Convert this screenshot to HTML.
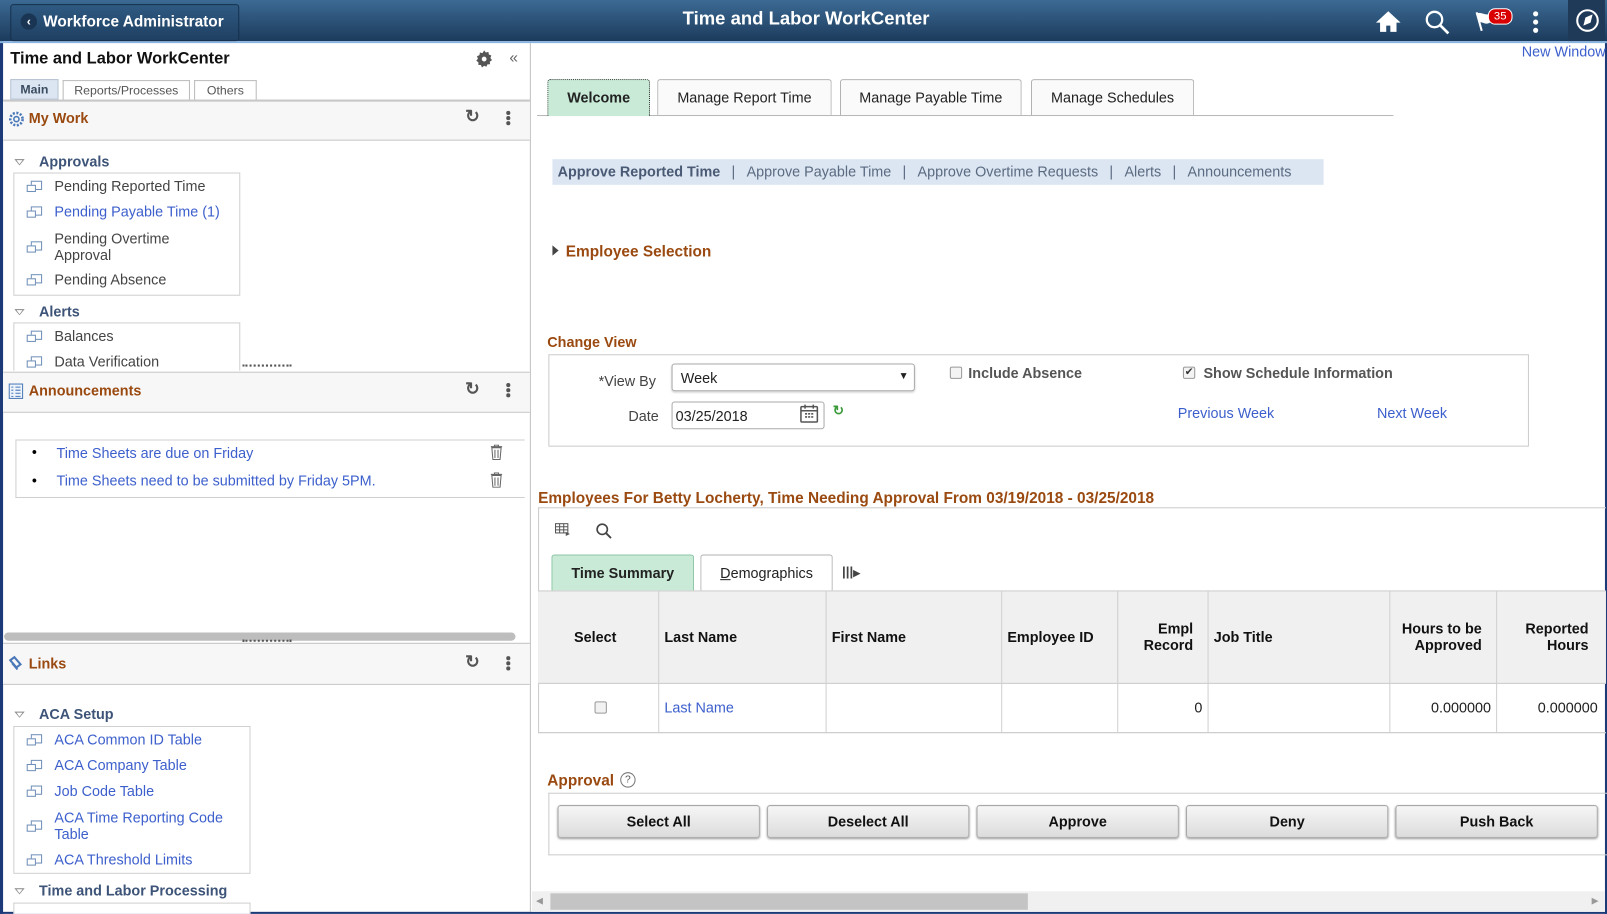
<!DOCTYPE html>
<html><head><meta charset="utf-8">
<style>
html,body{margin:0;padding:0;width:1607px;height:914px;overflow:hidden;background:#fff;font-family:"Liberation Sans",Arial,sans-serif;}
#w{position:absolute;left:0;top:0;width:1565px;height:890px;transform:scale(1.02684);transform-origin:0 0;}
.a{position:absolute;white-space:nowrap;}
.or{color:#9a4a10;font-weight:bold;}
.lk{color:#3c5fcc;}
.hd{position:absolute;left:3px;width:513px;background:#f7f7f7;border-top:1px solid #c8c8c8;border-bottom:1px solid #c8c8c8;}
.box{position:absolute;border:1px solid #d0d0d0;background:#fff;}
.ic{position:absolute;width:9px;height:7px;border:1px solid #6f8fb8;background:#fff;}
.ic:after{content:"";position:absolute;left:-5px;top:3px;width:7px;height:5px;border:1px solid #6f8fb8;background:#fff;}
.tri{position:absolute;width:0;height:0;border-left:5px solid transparent;border-right:5px solid transparent;border-top:6px solid #888;}
.tri:after{content:"";position:absolute;left:-3px;top:-5px;border-left:3px solid transparent;border-right:3px solid transparent;border-top:4px solid #fff;}
.tab{position:absolute;border:1px solid #b0b0b0;border-bottom:none;border-radius:3px 3px 0 0;background:#fafafa;font-size:14px;color:#222;text-align:center;box-sizing:border-box;}
.btn{position:absolute;top:784px;height:32px;width:197px;border:1px solid #a8a8a8;border-radius:3px;background:linear-gradient(#f6f6f6,#dcdcdc);box-shadow:0 1px 2px #999;font-size:14px;font-weight:bold;text-align:center;line-height:31px;color:#111;box-sizing:border-box;}
.th{position:absolute;font-size:14px;font-weight:bold;color:#111;}
.vl{position:absolute;width:1px;background:#d0d0d0;top:575px;height:139px;}
.sep{margin:0 11px;}
</style></head><body><div id="w">
<div class="a" style="left:0;top:0;width:3px;height:890px;background:#1c3a78"></div>
<div class="a" style="left:1563px;top:0;width:2px;height:890px;background:#1c3a78"></div>
<div class="a" style="left:0;top:888px;width:1565px;height:2px;background:#1c3a78"></div>
<div class="a" style="left:0;top:0;width:1565px;height:40px;background:linear-gradient(#3c6a94,#1c3b5c);border-bottom:2px solid #8ab4e0"></div>
<div class="a" style="left:10px;top:4px;width:221px;height:34px;border:1px solid #16304d;border-radius:3px;background:linear-gradient(#2f5a82,#1f4062)"></div>
<div class="a" style="left:20px;top:13px;width:16px;height:16px;border-radius:50%;background:#1a3553;color:#fff;font-size:12px;font-weight:bold;text-align:center;line-height:16px">‹</div>
<div class="a" style="left:42px;top:13px;color:#fff;font-weight:bold;font-size:15px">Workforce Administrator</div>
<div class="a" style="left:0;width:1570px;top:8px;text-align:center;color:#fff;font-weight:bold;font-size:18px">Time and Labor WorkCenter</div>
<svg class="a" style="left:1339px;top:9px" width="26" height="24" viewBox="0 0 26 24"><path d="M13 2L1 13h4v9h6v-6h4v6h6v-9h4z" fill="#fff"/></svg>
<svg class="a" style="left:1387px;top:9px" width="26" height="26" viewBox="0 0 26 26"><circle cx="10" cy="10" r="7.5" fill="none" stroke="#fff" stroke-width="2.2"/><path d="M15.5 15.5l8 8" stroke="#fff" stroke-width="2.6"/></svg>
<svg class="a" style="left:1436px;top:10px" width="20" height="22" viewBox="0 0 20 22"><path d="M2 2l5 18" stroke="#fff" stroke-width="2"/><path d="M2 3c5-2 8 3 14 0l-1 9c-5 3-8-2-11 0z" fill="#fff"/></svg>
<div class="a" style="left:1449px;top:8px;width:22px;height:14px;border-radius:7px;background:#d80000;border:1px solid #fff;color:#fff;font-size:11px;line-height:14px;text-align:center">35</div>
<div class="a" style="left:1493px;top:11px;width:5px;height:5px;border-radius:50%;background:#fff;box-shadow:0 8px 0 #fff,0 16px 0 #fff"></div>
<div class="a" style="left:1527px;top:0;width:36px;height:40px;background:#1f3a58"></div>
<svg class="a" style="left:1534px;top:8px" width="24" height="24" viewBox="0 0 24 24"><circle cx="12" cy="12" r="10" fill="none" stroke="#fff" stroke-width="2"/><path d="M8 17l2-8 7-3-2 8z" fill="#fff"/></svg>
<div class="a" style="left:516px;top:42px;width:1px;height:846px;background:#c0c0c0"></div>
<div class="a" style="left:10px;top:49px;font-size:16px;font-weight:bold;color:#111">Time and Labor WorkCenter</div>
<svg class="a" style="left:463px;top:49px" width="17" height="17" viewBox="0 0 16 16"><path d="M8 0l1.5 2 2.4-.6.4 2.4 2.3 1-.9 2.2 1.5 2-2 1.4.2 2.4-2.4.1-1 2.2L8 14.1l-2 1.6-1-2.2-2.4-.1.2-2.4-2-1.4 1.5-2-.9-2.2 2.3-1 .4-2.4 2.4.6z" fill="#555"/><circle cx="8" cy="8" r="2.2" fill="#fff"/></svg>
<div class="a" style="left:496px;top:48px;font-size:15px;color:#666">«</div>
<div class="a" style="left:3px;top:97px;width:513px;height:1px;background:#bbb"></div>
<div class="a" style="left:10px;top:77px;width:47px;height:20px;background:#dbe6f2;border:1px solid #b8c4d4;font-size:12px;font-weight:bold;color:#3b4b60;text-align:center;line-height:18px;box-sizing:border-box">Main</div>
<div class="a" style="left:61px;top:78px;width:124px;height:19px;border:1px solid #bbb;border-bottom:none;font-size:12px;color:#555;text-align:center;line-height:18px;box-sizing:border-box">Reports/Processes</div>
<div class="a" style="left:189px;top:78px;width:61px;height:19px;border:1px solid #bbb;border-bottom:none;font-size:12px;color:#555;text-align:center;line-height:18px;box-sizing:border-box">Others</div>
<div class="hd" style="top:98px;height:37px"></div>
<svg class="a" style="left:8px;top:108px" width="16" height="16" viewBox="0 0 16 16"><circle cx="8" cy="8" r="6" fill="none" stroke="#4a78b8" stroke-width="2.5" stroke-dasharray="2 1.5"/><circle cx="8" cy="8" r="2.5" fill="none" stroke="#4a78b8" stroke-width="1.5"/></svg>
<div class="a or" style="left:28px;top:107px;font-size:14px">My Work</div>
<div class="a" style="left:453px;top:104px;font-size:17px;font-weight:bold;color:#555">↻</div>
<div class="a" style="left:493px;top:108px;width:4px;height:4px;border-radius:50%;background:#555;box-shadow:0 5px 0 #555,0 10px 0 #555"></div>
<div class="tri" style="left:14px;top:155px"></div>
<div class="a" style="left:38px;top:149px;font-size:14px;font-weight:bold;color:#3d5478">Approvals</div>
<div class="box" style="left:13px;top:168px;width:219px;height:118px"></div>
<div class="ic" style="left:30px;top:176px"></div><div class="a" style="left:53px;top:173px;font-size:14px;color:#444">Pending Reported Time</div>
<div class="ic" style="left:30px;top:201px"></div><div class="a lk" style="left:53px;top:198px;font-size:14px">Pending Payable Time (1)</div>
<div class="ic" style="left:30px;top:235px"></div><div class="a" style="left:53px;top:224px;font-size:14px;color:#444;line-height:16px">Pending Overtime<br>Approval</div>
<div class="ic" style="left:30px;top:267px"></div><div class="a" style="left:53px;top:264px;font-size:14px;color:#444">Pending Absence</div>
<div class="tri" style="left:14px;top:301px"></div>
<div class="a" style="left:38px;top:295px;font-size:14px;font-weight:bold;color:#3d5478">Alerts</div>
<div class="box" style="left:13px;top:314px;width:219px;height:60px;border-bottom:none"></div>
<div class="ic" style="left:30px;top:322px"></div><div class="a" style="left:53px;top:319px;font-size:14px;color:#444">Balances</div>
<div class="ic" style="left:30px;top:347px"></div><div class="a" style="left:53px;top:344px;font-size:14px;color:#444">Data Verification</div>
<div class="a" style="left:3px;top:361px;width:513px;height:1px;background:#fff"></div>
<div class="a" style="left:236px;top:355px;width:48px;border-top:2px dotted #555"></div>
<div class="hd" style="top:362px;height:38px"></div>
<svg class="a" style="left:8px;top:373px" width="15" height="16" viewBox="0 0 15 16"><rect x="1" y="1" width="13" height="14" fill="#eef4fb" stroke="#4a78b8"/><path d="M3 4h2M7 4h5M3 7h2M7 7h5M3 10h2M7 10h5M3 13h2M7 13h5" stroke="#4a78b8"/></svg>
<div class="a or" style="left:28px;top:372px;font-size:14px">Announcements</div>
<div class="a" style="left:453px;top:369px;font-size:17px;font-weight:bold;color:#555">↻</div>
<div class="a" style="left:493px;top:373px;width:4px;height:4px;border-radius:50%;background:#555;box-shadow:0 5px 0 #555,0 10px 0 #555"></div>
<div class="box" style="left:15px;top:428px;width:495px;height:55px;border-right:none"></div>
<div class="a" style="left:31px;top:432px;font-size:14px">•</div>
<div class="a lk" style="left:55px;top:433px;font-size:14px">Time Sheets are due on Friday</div>
<div class="a" style="left:31px;top:460px;font-size:14px">•</div>
<div class="a lk" style="left:55px;top:460px;font-size:14px">Time Sheets need to be submitted by Friday 5PM.</div>
<svg class="a" style="left:477px;top:433px" width="13" height="15" viewBox="0 0 13 15"><path d="M1 2h11M4.5 2V0.5h4V2M2 3l1 11.5h7L11 3z" fill="none" stroke="#666"/><path d="M5 5v8M8 5v8" stroke="#666"/></svg>
<svg class="a" style="left:477px;top:460px" width="13" height="15" viewBox="0 0 13 15"><path d="M1 2h11M4.5 2V0.5h4V2M2 3l1 11.5h7L11 3z" fill="none" stroke="#666"/><path d="M5 5v8M8 5v8" stroke="#666"/></svg>
<div class="a" style="left:4px;top:616px;width:498px;height:8px;border-radius:4px;background:#bdbdbd"></div>
<div class="a" style="left:3px;top:626px;width:513px;height:1px;background:#bbb"></div>
<div class="a" style="left:236px;top:623px;width:48px;border-top:2px dotted #555"></div>
<div class="hd" style="top:627px;height:39px;border-top:none"></div>
<svg class="a" style="left:7px;top:638px" width="16" height="16" viewBox="0 0 16 16"><path d="M3 5l4-3 6 7-4 3z" fill="none" stroke="#4a78b8" stroke-width="2"/><path d="M5 8l5 6" stroke="#4a78b8" stroke-width="2"/></svg>
<div class="a or" style="left:28px;top:638px;font-size:14px">Links</div>
<div class="a" style="left:453px;top:635px;font-size:17px;font-weight:bold;color:#555">↻</div>
<div class="a" style="left:493px;top:639px;width:4px;height:4px;border-radius:50%;background:#555;box-shadow:0 5px 0 #555,0 10px 0 #555"></div>
<div class="tri" style="left:14px;top:693px"></div>
<div class="a" style="left:38px;top:687px;font-size:14px;font-weight:bold;color:#3d5478">ACA Setup</div>
<div class="box" style="left:13px;top:707px;width:229px;height:142px"></div>
<div class="ic" style="left:30px;top:715px"></div><div class="a lk" style="left:53px;top:712px;font-size:14px">ACA Common ID Table</div>
<div class="ic" style="left:30px;top:740px"></div><div class="a lk" style="left:53px;top:737px;font-size:14px">ACA Company Table</div>
<div class="ic" style="left:30px;top:765px"></div><div class="a lk" style="left:53px;top:762px;font-size:14px">Job Code Table</div>
<div class="ic" style="left:30px;top:799px"></div><div class="a lk" style="left:53px;top:788px;font-size:14px;line-height:16px">ACA Time Reporting Code<br>Table</div>
<div class="ic" style="left:30px;top:832px"></div><div class="a lk" style="left:53px;top:829px;font-size:14px">ACA Threshold Limits</div>
<div class="tri" style="left:14px;top:865px"></div>
<div class="a" style="left:38px;top:859px;font-size:14px;font-weight:bold;color:#3d5478">Time and Labor Processing</div>
<div class="box" style="left:13px;top:879px;width:229px;height:10px;border-bottom:none"></div>
<div class="a lk" style="left:1482px;top:42px;font-size:14px">New Window</div>
<div class="a" style="left:523px;top:112px;width:834px;height:1px;background:#b8b8b8"></div>
<div class="tab" style="left:533px;top:77px;width:100px;height:36px;background:#c8ead7;border:1px dotted #333;border-bottom:none;font-weight:bold;line-height:34px">Welcome</div>
<div class="tab" style="left:640px;top:77px;width:170px;height:35px;line-height:34px">Manage Report Time</div>
<div class="tab" style="left:818px;top:77px;width:177px;height:35px;line-height:34px">Manage Payable Time</div>
<div class="tab" style="left:1004px;top:77px;width:159px;height:35px;line-height:34px">Manage Schedules</div>
<div class="a" style="left:538px;top:155px;width:751px;height:25px;background:#dce6f2"></div>
<div class="a" style="left:543px;top:159px;font-size:14px;color:#5a6a80"><b style="color:#4a5a74">Approve Reported Time</b><span class="sep">|</span>Approve Payable Time<span class="sep">|</span>Approve Overtime Requests<span class="sep">|</span>Alerts<span class="sep">|</span>Announcements</div>
<div class="a" style="left:538px;top:239px;width:0;height:0;border-top:5px solid transparent;border-bottom:5px solid transparent;border-left:6px solid #444"></div>
<div class="a or" style="left:551px;top:237px;font-size:15px">Employee Selection</div>
<div class="a or" style="left:533px;top:325px;font-size:14px">Change View</div>
<div class="a" style="left:534px;top:345px;width:955px;height:90px;border:1px solid #ccc;box-sizing:border-box"></div>
<div class="a" style="left:583px;top:363px;font-size:14px;color:#444">*View By</div>
<div class="a" style="left:654px;top:354px;width:237px;height:27px;border:1px solid #aaa;border-radius:3px;box-sizing:border-box;box-shadow:0 1px 2px #ccc"></div>
<div class="a" style="left:663px;top:360px;font-size:14px;color:#222">Week</div>
<div class="a" style="left:875px;top:361px;font-size:10px;color:#222">▼</div>
<div class="a" style="left:612px;top:397px;font-size:14px;color:#444">Date</div>
<div class="a" style="left:654px;top:391px;width:149px;height:27px;border:1px solid #aaa;border-radius:3px;box-sizing:border-box"></div>
<div class="a" style="left:658px;top:397px;font-size:14px;color:#222">03/25/2018</div>
<svg class="a" style="left:778px;top:393px" width="20" height="20" viewBox="0 0 20 20"><rect x="2" y="3" width="16" height="15" rx="1" fill="none" stroke="#555" stroke-width="1.5"/><path d="M2 7h16M6 1v4M14 1v4" stroke="#555" stroke-width="1.5"/><path d="M6 10h2M9 10h2M12 10h2M6 13h2M9 13h2M12 13h2" stroke="#555" stroke-width="1.6"/></svg>
<div class="a" style="left:811px;top:392px;font-size:13px;color:#3a9a3a;font-weight:bold">↻</div>
<div class="a" style="left:925px;top:357px;width:10px;height:10px;border:1px solid #999;border-radius:2px;background:#f4f4f4"></div>
<div class="a" style="left:943px;top:355px;font-size:14px;font-weight:bold;color:#555">Include Absence</div>
<div class="a" style="left:1152px;top:357px;width:10px;height:10px;border:1px solid #999;border-radius:2px;background:#f4f4f4;font-size:10px;line-height:10px;text-align:center;color:#333">✔</div>
<div class="a" style="left:1172px;top:355px;font-size:14px;font-weight:bold;color:#555">Show Schedule Information</div>
<div class="a lk" style="left:1147px;top:394px;font-size:14px">Previous Week</div>
<div class="a lk" style="left:1341px;top:394px;font-size:14px">Next Week</div>
<div class="a or" style="left:524px;top:477px;font-size:15px">Employees For Betty Locherty, Time Needing Approval From 03/19/2018 - 03/25/2018</div>
<div class="a" style="left:524px;top:494px;width:1040px;height:220px;border:1px solid #ccc;border-right:none;box-sizing:border-box"></div>
<svg class="a" style="left:540px;top:509px" width="16" height="14" viewBox="0 0 16 14"><rect x="1" y="1" width="12" height="9" fill="none" stroke="#555"/><path d="M1 4h12M1 7h12M5 1v9M9 1v9" stroke="#555"/><path d="M11 9l4 2-4 2z" fill="#555"/></svg>
<svg class="a" style="left:580px;top:509px" width="16" height="16" viewBox="0 0 16 16"><circle cx="6.5" cy="6.5" r="5" fill="none" stroke="#444" stroke-width="1.6"/><path d="M10 10l5 5" stroke="#444" stroke-width="1.8"/></svg>
<div class="tab" style="left:537px;top:540px;width:139px;height:35px;background:#c8ead7;border-color:#8cc4a4;font-weight:bold;line-height:34px">Time Summary</div>
<div class="tab" style="left:682px;top:540px;width:129px;height:35px;background:#fff;line-height:34px"><u>D</u>emographics</div>
<div class="a" style="left:820px;top:549px;font-size:13px;color:#444;font-weight:bold">|||<span style="font-size:9px">▶</span></div>
<div class="a" style="left:524px;top:575px;width:1040px;height:91px;background:#f0f0f0;border-top:1px solid #ccc;border-bottom:1px solid #ccc;box-sizing:border-box"></div>
<div class="a" style="left:524px;top:713px;width:1040px;height:1px;background:#ccc"></div>
<div class="vl" style="left:641px"></div><div class="vl" style="left:804px"></div><div class="vl" style="left:975px"></div><div class="vl" style="left:1088px"></div><div class="vl" style="left:1176px"></div><div class="vl" style="left:1353px"></div><div class="vl" style="left:1457px"></div>
<div class="th" style="left:559px;top:612px">Select</div>
<div class="th" style="left:647px;top:612px">Last Name</div>
<div class="th" style="left:810px;top:612px">First Name</div>
<div class="th" style="left:981px;top:612px">Employee ID</div>
<div class="th" style="left:1088px;width:74px;top:604px;text-align:right;line-height:16px">Empl<br>Record</div>
<div class="th" style="left:1182px;top:612px">Job Title</div>
<div class="th" style="left:1353px;width:90px;top:604px;text-align:right;line-height:16px">Hours to be<br>Approved</div>
<div class="th" style="left:1457px;width:90px;top:604px;text-align:right;line-height:16px">Reported<br>Hours</div>
<div class="a" style="left:579px;top:683px;width:10px;height:10px;border:1px solid #999;border-radius:2px;background:#f2f2f2"></div>
<div class="a lk" style="left:647px;top:681px;font-size:14px">Last Name</div>
<div class="a" style="left:1088px;width:83px;top:681px;font-size:14px;text-align:right;color:#222">0</div>
<div class="a" style="left:1353px;width:99px;top:681px;font-size:14px;text-align:right;color:#222">0.000000</div>
<div class="a" style="left:1457px;width:99px;top:681px;font-size:14px;text-align:right;color:#222">0.000000</div>
<div class="a or" style="left:533px;top:752px;font-size:15px">Approval</div>
<div class="a" style="left:604px;top:752px;width:13px;height:13px;border:1px solid #777;border-radius:50%;font-size:10px;text-align:center;line-height:13px;color:#555">?</div>
<div class="a" style="left:534px;top:772px;width:1031px;height:61px;border:1px solid #ccc;border-right:none;box-sizing:border-box"></div>
<div class="btn" style="left:543px">Select All</div>
<div class="btn" style="left:747px">Deselect All</div>
<div class="btn" style="left:951px">Approve</div>
<div class="btn" style="left:1155px">Deny</div>
<div class="btn" style="left:1359px">Push Back</div>
<div class="a" style="left:518px;top:868px;width:1045px;height:20px;background:#f0f0f0"></div>
<div class="a" style="left:536px;top:870px;width:465px;height:16px;background:#c4c4c4"></div>
<div class="a" style="left:522px;top:872px;font-size:9px;color:#999">◀</div>
<div class="a" style="left:1550px;top:872px;font-size:9px;color:#999">▶</div>
</div></body></html>
